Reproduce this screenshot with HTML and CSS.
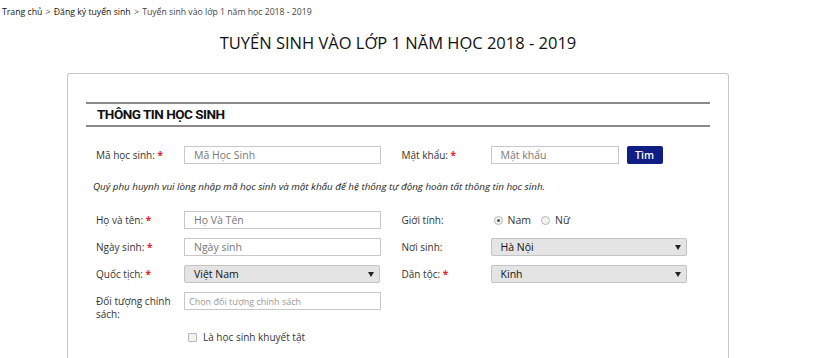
FILE: index.html
```html
<!DOCTYPE html>
<html lang="vi">
<head>
<meta charset="utf-8">
<link rel="stylesheet" href="styles.css">
</head>
<body>
<nav class="crumbs"><a>Trang chủ</a> <span class="sep">&gt;</span> <a>Đăng ký tuyển sinh</a> <span class="sep">&gt;</span> <span class="cur">Tuyển sinh vào lớp 1 năm học 2018 - 2019</span></nav>
<div class="wrap">
  <h1 class="title">TUYỂN SINH VÀO LỚP 1 NĂM HỌC 2018 - 2019</h1>
  <div class="card">
    <h2 class="section">THÔNG TIN HỌC SINH</h2>
    <div class="row">
      <div class="field"><label class="lbl">Mã học sinh: <b class="req">*</b></label><input class="inp" placeholder="Mã Học Sinh"></div>
      <div class="field right"><label class="lbl">Mật khẩu: <b class="req">*</b></label><input class="inp short" placeholder="Mật khẩu"><button class="btn">Tìm</button></div>
    </div>
    <p class="note">Quý phụ huynh vui lòng nhập mã học sinh và mật khẩu để hệ thống tự động hoàn tất thông tin học sinh.</p>
    <div class="row">
      <div class="field"><label class="lbl">Họ và tên: <b class="req">*</b></label><input class="inp" placeholder="Họ Và Tên"></div>
      <div class="field right"><label class="lbl">Giới tính:</label><div class="radios"><span class="radio on"></span>Nam<span class="radio"></span>Nữ</div></div>
    </div>
    <div class="row">
      <div class="field"><label class="lbl">Ngày sinh: <b class="req">*</b></label><input class="inp" placeholder="Ngày sinh"></div>
      <div class="field right"><label class="lbl">Nơi sinh:</label><div class="sel">Hà Nội<span class="caret"></span></div></div>
    </div>
    <div class="row">
      <div class="field"><label class="lbl">Quốc tịch: <b class="req">*</b></label><div class="sel">Việt Nam<span class="caret"></span></div></div>
      <div class="field right"><label class="lbl">Dân tộc: <b class="req">*</b></label><div class="sel">Kinh<span class="caret"></span></div></div>
    </div>
    <div class="row tall">
      <div class="field"><label class="lbl two">Đối tượng chính sách:</label><input class="inp small" placeholder="Chọn đối tượng chính sách"></div>
    </div>
    <div class="check"><span class="box"></span>Là học sinh khuyết tật</div>
  </div>
</div>
</body>
</html>
```
FILE: styles.css
```css
* { box-sizing: border-box; }
body {
  margin: 0;
  background: #fff;
  font-family: "Open Sans", "Noto Sans", sans-serif;
  color: #333;
}
.crumbs {
  padding: 5px 0 0 2px;
  font-size: 8.7px;
  line-height: 14px;
  color: #333;
  height: 31px;
}
.crumbs a { color: #111; font-weight: 500; }
.crumbs .sep { color: #555; padding: 0 1px; }
.crumbs .cur { color: #444; }
.wrap {
  margin-left: 67px;
  width: 662px;
}
.title {
  margin: 0;
  text-align: center;
  font-weight: 400;
  font-size: 16.5px;
  line-height: 24px;
  color: #111;
  height: 42px;
}
.card {
  border: 1px solid #c8c8c8;
  border-bottom: none;
  border-radius: 3px 3px 0 0;
  padding: 28px 18px 40px 18px;
  height: 300px;
}
.section {
  margin: 0 0 19px 0;
  border-top: 2px solid #8a8a8a;
  border-bottom: 2px solid #8a8a8a;
  height: 25px;
  padding: 0 0 0 11px;
  font-family: Roboto, "Liberation Sans", sans-serif;
  font-weight: 700;
  font-size: 13.5px;
  letter-spacing: -0.5px;
  line-height: 21px;
  color: #111;
}
.row {
  display: flex;
  height: 27px;
  padding-left: 10px;
}
.row.tall { height: 38px; }
.field {
  display: flex;
  align-items: flex-start;
  width: 317px;
}
.field.right { width: 320px; }
.lbl {
  width: 88px;
  flex: none;
  font-size: 10px;
  line-height: 18px;
  color: #333;
}
.lbl.two { line-height: 13px; padding-top: 3px; }
.req { color: #e3262b; font-weight: 700; }
.inp {
  width: 197px;
  height: 18px;
  border: 1px solid #c8c8c8;
  padding: 0 9px;
  font-family: inherit;
  font-size: 10.5px;
  color: #333;
  outline: none;
}
.inp::placeholder { color: #777; }
.inp.small { font-size: 9px; padding-left: 4px; }
.inp.small::placeholder { color: #999; }
.inp.short { width: 128px; margin-left: 1px; }
.btn {
  margin-left: 8px;
  width: 36px;
  height: 18px;
  border: none;
  border-radius: 2px;
  background: #0f1d85;
  color: #fff;
  font-family: inherit;
  font-size: 10.5px;
  font-weight: 600;
  padding: 0;
}
.note {
  margin: 6px 0 17px 7px;
  font-style: italic;
  font-size: 9.8px;
  line-height: 15px;
  color: #222;
}
.radios {
  display: flex;
  align-items: center;
  height: 18px;
  font-size: 10.5px;
  padding-left: 4px;
}
.radio {
  width: 9px;
  height: 9px;
  border-radius: 50%;
  border: 1px solid #b8b8b8;
  background: #f2f2f2;
  margin-right: 5px;
  position: relative;
}
.radio:not(.on) { margin-left: 10px; }
.radio.on::after {
  content: "";
  position: absolute;
  left: 2px; top: 2px;
  width: 3px; height: 3px;
  border-radius: 50%;
  background: #555;
}
.sel {
  position: relative;
  width: 196px;
  height: 18px;
  background: #e4e4e4;
  border: 1px solid #c4c4c4;
  border-radius: 2px;
  padding-left: 9px;
  font-size: 10.5px;
  line-height: 16px;
  font-weight: 400;
  color: #111;
}
.right .sel { margin-left: 1px; }
.caret {
  position: absolute;
  right: 5px;
  top: 6px;
  border-left: 3px solid transparent;
  border-right: 3px solid transparent;
  border-top: 5px solid #222;
}
.check {
  display: flex;
  align-items: center;
  padding-left: 102px;
  font-size: 10px;
  color: #333;
}
.box {
  width: 9px;
  height: 9px;
  border: 1px solid #b8b8b8;
  background: #f2f2f2;
  border-radius: 1px;
  margin-right: 6px;
}
```
